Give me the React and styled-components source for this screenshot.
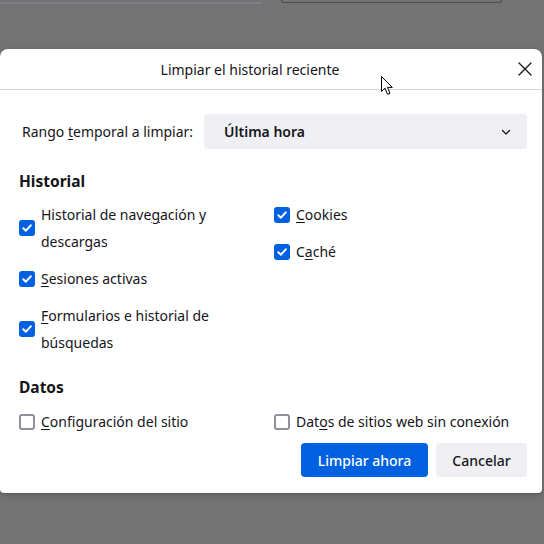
import React from "react";
import styled, { createGlobalStyle } from "styled-components";

const GlobalStyle = createGlobalStyle`
  html, body { margin: 0; padding: 0; background: #737373; }
  body {
    font-family: "Segoe UI", "Noto Sans", "Open Sans", sans-serif;
    color: #15141a;
    -webkit-font-smoothing: antialiased;
  }
  * { box-sizing: border-box; }
`;

const Page = styled.div`
  width: 544px;
  height: 544px;
  overflow: hidden;
  position: relative;
  display: flex;
  flex-direction: column;
  background: #737373;
`;

const BackdropStrip = styled.div`
  height: 49px;
  display: flex;
  align-items: flex-start;
  flex-shrink: 0;
`;

const TabLine = styled.div`
  width: 262px;
  height: 2px;
  margin-top: 2px;
  background: #7c8088;
`;

const PanelEdge = styled.div`
  width: 221px;
  height: 3px;
  margin-left: 19px;
  border: 1px solid #4d4d4d;
  border-top: none;
  border-radius: 0 0 3px 3px;
`;

const Dialog = styled.div`
  width: 542px;
  background: #ffffff;
  border-radius: 8px 8px 4px 4px;
  box-shadow: 0 1px 0 #5b5b5b, 0 2px 6px rgba(0, 0, 0, 0.18);
  display: flex;
  flex-direction: column;
`;

const Header = styled.div`
  height: 41px;
  display: flex;
  align-items: center;
  border-bottom: 1px solid #d4d4da;
`;

const Title = styled.div`
  flex: 1;
  text-align: center;
  padding-right: 8px;
  font-size: 14px;
  padding-top: 1px;
`;

const CloseButton = styled.button`
  width: 34px;
  height: 32px;
  border: none;
  background: transparent;
  display: flex;
  align-items: center;
  justify-content: center;
  padding: 0;
  color: #15141a;
`;

const Body = styled.div`
  padding: 24px 15px 16px 19px;
  display: flex;
  flex-direction: column;
`;

const RangeRow = styled.div`
  display: flex;
  align-items: center;
  gap: 11px;
  padding-left: 3px;
`;

const RangeLabel = styled.span`
  font-size: 14px;
  white-space: nowrap;
`;

const Select = styled.div`
  flex: 1;
  height: 35px;
  background: #f0f0f4;
  border-radius: 4px;
  display: flex;
  align-items: center;
  justify-content: space-between;
  padding: 0 15px 0 20px;
  font-size: 14px;
  font-weight: 600;
`;

const SectionTitle = styled.div`
  font-size: 15.5px;
  font-weight: 700;
  line-height: 22px;
  margin-top: ${(p) => p.$top}px;
`;

const Grid = styled.div`
  display: grid;
  grid-template-columns: 255px 1fr;
  margin-top: ${(p) => p.$top}px;
`;

const Column = styled.div`
  display: flex;
  flex-direction: column;
  gap: 10px;
`;

const Item = styled.label`
  display: flex;
  align-items: center;
  gap: 6px;
`;

const Box = styled.span`
  width: 16px;
  height: 16px;
  flex-shrink: 0;
  border-radius: 3px;
  display: flex;
  align-items: center;
  justify-content: center;
  background: ${(p) => (p.$checked ? "#0061e0" : "#ffffff")};
  border: ${(p) => (p.$checked ? "none" : "2px solid #8f8f9d")};
`;

const ItemText = styled.span`
  font-size: 14px;
  line-height: 27px;
`;

const Key = styled.span`
  text-decoration: underline;
  text-underline-offset: 2px;
  text-decoration-thickness: 1px;
`;

const Footer = styled.div`
  display: flex;
  justify-content: flex-end;
  gap: 8px;
  margin-top: 8px;
`;

const Button = styled.button`
  height: 34px;
  padding: 0 16px;
  border: none;
  border-radius: 4px;
  font-family: inherit;
  font-size: 14px;
  font-weight: 500;
  background: ${(p) => (p.$primary ? "#0061e0" : "#f0f0f4")};
  color: ${(p) => (p.$primary ? "#ffffff" : "#15141a")};
  min-width: ${(p) => p.$w}px;
`;

const Cursor = styled.svg`
  position: absolute;
  left: 381px;
  top: 76px;
`;

const Check = () => (
  <svg width="12" height="12" viewBox="0 0 12 12">
    <path d="M2.3 6.2 L4.9 8.7 L9.8 3.3" fill="none" stroke="#fff" strokeWidth="2" strokeLinecap="round" strokeLinejoin="round" />
  </svg>
);

const CheckItem = ({ checked, children }) => (
  <Item>
    <Box $checked={checked}>{checked && <Check />}</Box>
    <ItemText>{children}</ItemText>
  </Item>
);

export default function App() {
  return (
    <>
      <GlobalStyle />
      <Page>
        <BackdropStrip>
          <TabLine />
          <PanelEdge />
        </BackdropStrip>
        <Dialog>
          <Header>
            <Title>Limpiar el historial reciente</Title>
            <CloseButton aria-label="Cerrar">
              <svg width="14" height="14" viewBox="0 0 14 14">
                <path d="M1 1 L13 13 M13 1 L1 13" stroke="#15141a" strokeWidth="1.3" strokeLinecap="round" />
              </svg>
            </CloseButton>
          </Header>
          <Body>
            <RangeRow>
              <RangeLabel>
                Rango <Key>t</Key>emporal a limpiar:
              </RangeLabel>
              <Select>
                <span>Última hora</span>
                <svg width="12" height="12" viewBox="0 0 12 12">
                  <path d="M2.5 4.5 L6 8 L9.5 4.5" fill="none" stroke="#15141a" strokeWidth="1.2" strokeLinecap="round" strokeLinejoin="round" />
                </svg>
              </Select>
            </RangeRow>

            <SectionTitle $top={21}>Historial</SectionTitle>
            <Grid $top={9}>
              <Column>
                <CheckItem checked>
                  Historial de nave<Key>g</Key>ación y
                  <br />
                  descargas
                </CheckItem>
                <CheckItem checked>
                  <Key>S</Key>esiones activas
                </CheckItem>
                <CheckItem checked>
                  <Key>F</Key>ormularios e historial de
                  <br />
                  búsquedas
                </CheckItem>
              </Column>
              <Column>
                <CheckItem checked>
                  <Key>C</Key>ookies
                </CheckItem>
                <CheckItem checked>
                  C<Key>a</Key>ché
                </CheckItem>
              </Column>
            </Grid>

            <SectionTitle $top={20}>Datos</SectionTitle>
            <Grid $top={10}>
              <Column>
                <CheckItem>
                  <Key>C</Key>onfiguración del sitio
                </CheckItem>
              </Column>
              <Column>
                <CheckItem>
                  Dat<Key>o</Key>s de sitios web sin conexión
                </CheckItem>
              </Column>
            </Grid>

            <Footer>
              <Button $primary $w={127}>Limpiar ahora</Button>
              <Button $w={91}>Cancelar</Button>
            </Footer>
          </Body>
        </Dialog>
        <Cursor width="13" height="20" viewBox="0 0 13 20">
          <path d="M0.5 0.5 L0.5 15.5 L4 12.2 L6.6 18.3 L9 17.3 L6.5 11.4 L11.3 11.4 Z" fill="#ffffff" stroke="#000000" strokeWidth="1" strokeLinejoin="round" />
        </Cursor>
      </Page>
    </>
  );
}
